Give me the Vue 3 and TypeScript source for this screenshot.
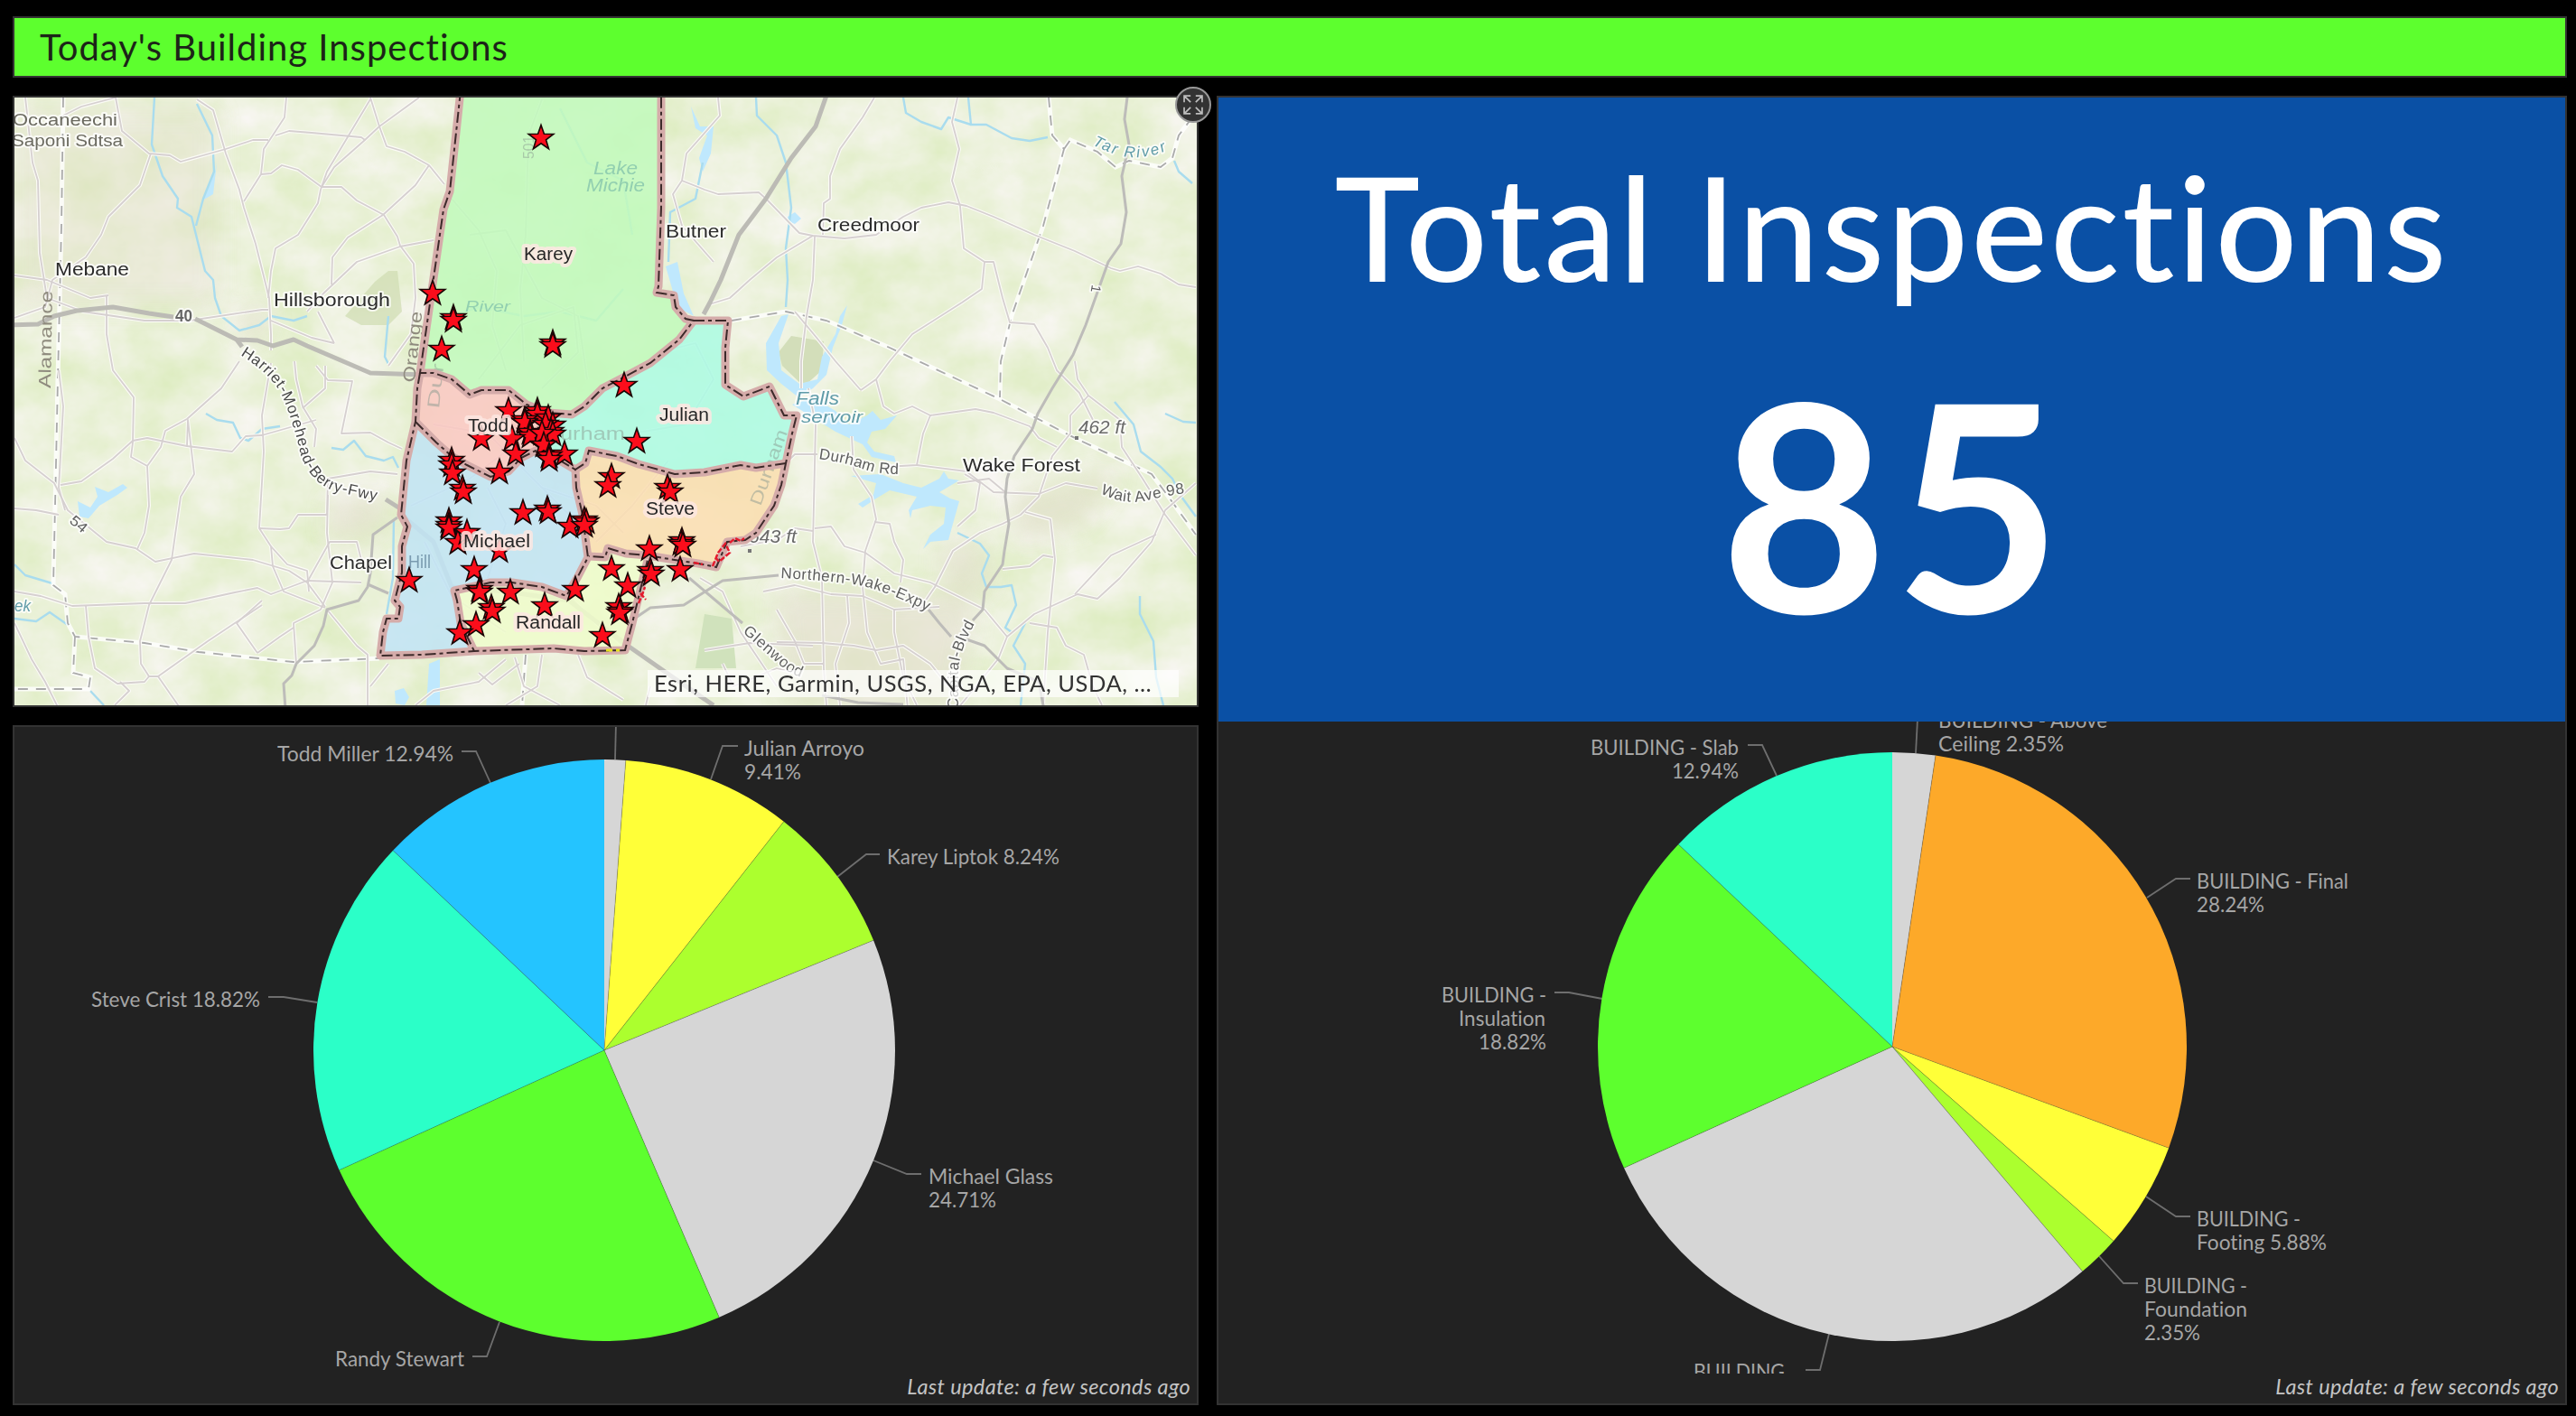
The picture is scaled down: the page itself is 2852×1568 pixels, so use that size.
<script setup lang="ts">
type Pt = [number, number]

interface Slice { value: number; color: string }
interface Label { x: number; y: number; w: number; text: string }
interface Pie { cx: number; cy: number; r: number; slices: Slice[]; leaders: string[]; labels: Label[] }
interface Place { x: number; y: number; w: number; text: string; kind: string; size?: number; rot?: number }

const inspectors: Pie = {
  cx: 669, cy: 1163, r: 322,
  slices: [
    { value: 1.18, color: '#d6d6d6' },
    { value: 9.41, color: '#ffff38' },
    { value: 8.24, color: '#acff2e' },
    { value: 24.71, color: '#d6d6d6' },
    { value: 24.71, color: '#5dff2e' },
    { value: 18.82, color: '#2bffc8' },
    { value: 12.94, color: '#24c4ff' },
  ],
  leaders: [
    '682,800 681,841', '817,826 800,826 787,863', '974,946 959,946 927,971',
    '1020,1300 1004,1300 967,1285', '523,1502 539,1502 553,1464',
    '297,1104 314,1104 351,1110', '511,832 527,832 543,867',
  ],
  labels: [
    { x: 307, y: 843, w: 195, text: 'Todd Miller 12.94%' },
    { x: 824, y: 837, w: 133, text: 'Julian Arroyo' },
    { x: 824, y: 863, w: 63, text: '9.41%' },
    { x: 982, y: 957, w: 191, text: 'Karey Liptok 8.24%' },
    { x: 101, y: 1115, w: 187, text: 'Steve Crist 18.82%' },
    { x: 1028, y: 1311, w: 138, text: 'Michael Glass' },
    { x: 1028, y: 1337, w: 75, text: '24.71%' },
    { x: 371, y: 1513, w: 143, text: 'Randy Stewart' },
  ],
}

const kinds: Pie = {
  cx: 2095, cy: 1159, r: 326,
  slices: [
    { value: 2.35, color: '#d6d6d6' },
    { value: 28.24, color: '#fda929' },
    { value: 5.88, color: '#ffff38' },
    { value: 2.35, color: '#acff2e' },
    { value: 29.42, color: '#d6d6d6' },
    { value: 18.82, color: '#5dff2e' },
    { value: 12.94, color: '#2bffc8' },
  ],
  leaders: [
    '2123,796 2121,834', '2425,973 2409,973 2377,994', '2425,1347 2409,1347 2376,1325',
    '2367,1421 2351,1421 2324,1391', '1999,1517 2015,1517 2025,1477',
    '1721,1099 1737,1099 1774,1106', '1935,825 1951,825 1967,859',
  ],
  labels: [
    { x: 2146, y: 806, w: 187, text: 'BUILDING - Above' },
    { x: 2146, y: 832, w: 139, text: 'Ceiling 2.35%' },
    { x: 1761, y: 836, w: 164, text: 'BUILDING - Slab' },
    { x: 1851, y: 862, w: 74, text: '12.94%' },
    { x: 2432, y: 984, w: 168, text: 'BUILDING - Final' },
    { x: 2432, y: 1010, w: 75, text: '28.24%' },
    { x: 1596, y: 1110, w: 116, text: 'BUILDING -' },
    { x: 1615, y: 1136, w: 96, text: 'Insulation' },
    { x: 1637, y: 1162, w: 75, text: '18.82%' },
    { x: 2432, y: 1358, w: 115, text: 'BUILDING -' },
    { x: 2432, y: 1384, w: 144, text: 'Footing 5.88%' },
    { x: 2374, y: 1432, w: 114, text: 'BUILDING -' },
    { x: 2374, y: 1458, w: 114, text: 'Foundation' },
    { x: 2374, y: 1484, w: 62, text: '2.35%' },
    { x: 1875, y: 1527, w: 101, text: 'BUILDING' },
  ],
}

function wedges(p: Pie) {
  const total = p.slices.reduce((s, v) => s + v.value, 0)
  let acc = 0
  const at = (f: number) => {
    const a = f * 2 * Math.PI
    return `${(p.cx + p.r * Math.sin(a)).toFixed(2)},${(p.cy - p.r * Math.cos(a)).toFixed(2)}`
  }
  return p.slices.map((s) => {
    const from = acc / total
    acc += s.value
    const to = acc / total
    return {
      color: s.color,
      d: `M${p.cx},${p.cy}L${at(from)}A${p.r},${p.r} 0 ${to - from > 0.5 ? 1 : 0} 1 ${at(to)}Z`,
      edge: `M${p.cx},${p.cy}L${at(from)}`,
    }
  })
}

const inspectorWedges = wedges(inspectors)
const kindWedges = wedges(kinds)

function starPath([x, y]: Pt, r = 14.5): string {
  const pts: string[] = []
  for (let i = 0; i < 10; i++) {
    const a = (i * Math.PI) / 5
    const q = i % 2 ? r * 0.4 : r
    pts.push(`${(x + q * Math.sin(a)).toFixed(1)},${(y - q * Math.cos(a)).toFixed(1)}`)
  }
  return pts.join(' ')
}

const stars: Pt[] = [
  [599, 153], [479, 325], [502, 352], [502, 355], [489, 387], [612, 380], [612, 383], [691, 427], [705, 489],
  [563, 455], [595, 455], [595, 459], [581, 465], [581, 468], [607, 463], [612, 471], [604, 470], [587, 479], [587, 483],
  [610, 478], [612, 481], [600, 480], [602, 493], [567, 486], [533, 486], [571, 503], [553, 523], [625, 503],
  [608, 505], [608, 509], [500, 510], [500, 515], [501, 524], [512, 541], [513, 545], [497, 577], [497, 582],
  [497, 585], [507, 601], [517, 590], [553, 610], [525, 631], [531, 653], [531, 656], [565, 656], [544, 673], [545, 677],
  [527, 692], [509, 701], [603, 671], [637, 653], [579, 568], [606, 564], [607, 567], [631, 583], [647, 576],
  [649, 578], [647, 582], [677, 528], [673, 538], [739, 540], [742, 545], [755, 599], [754, 602], [756, 604],
  [719, 608], [720, 632], [721, 636], [753, 631], [677, 630], [695, 649], [685, 672], [687, 677], [686, 679],
  [667, 704], [453, 643],
]

const districts = [
  { fill: '#c2f9bc', d: 'M510,100L498,212L491,232L480,308L465,413L480,413L500,420L520,437L533,432L563,432L583,448L607,457L633,459L647,450L667,430L692,417L720,402L752,376L768,355L759,353L748,340L746,327L727,324L729,317L732,230L732,100Z' },
  { fill: '#f9c8c1', d: 'M465,413L480,413L500,420L520,437L533,432L563,432L583,448L607,457L604,500L593,499L577,507L563,522L543,528L517,515L500,505L483,490L460,467L462,430Z' },
  { fill: '#adfae2', d: 'M607,457L633,459L647,450L667,430L692,417L720,402L752,376L768,355L806,355L803,385L803,426L823,439L852,428L868,460L882,460L877,480L870,513L837,518L820,515L780,523L747,525L707,514L683,505L652,499L648,513L637,520L620,510L604,500Z' },
  { fill: '#fadeb2', d: 'M870,513L865,537L857,560L837,590L825,598L805,600L793,628L773,624L747,620L717,615L693,613L673,607L670,617L652,616L648,595L645,570L638,540L637,520L648,513L652,499L683,505L707,514L747,525L780,523L820,515L837,518Z' },
  { fill: '#c1e4f4', d: 'M460,467L450,510L444,570L451,583L445,605L445,634L437,665L443,672L441,685L428,685L424,700L421,726L467,725L525,721L510,690L503,654L543,645L567,645L600,650L627,660L639,640L651,617L648,595L645,570L638,540L637,520L620,510L593,499L577,507L563,522L543,528L517,515L500,505L483,490Z' },
  { fill: '#effccc', d: 'M525,721L613,718L647,721L692,720L700,690L717,620L693,613L673,607L670,617L651,617L639,640L627,660L600,650L567,645L543,645L503,654L510,690Z' },
]

// Each shared boundary appears once so that the dashes stay readable.
const borders = [
  'M510,100L498,212L491,232L480,308L465,413L480,413L500,420L520,437L533,432L563,432L583,448L607,457L633,459L647,450L667,430L692,417L720,402L752,376L768,355L759,353L748,340L746,327L727,324L729,317L732,230L732,100',
  'M768,355L806,355L803,385L803,426L823,439L852,428L868,460L882,460L877,480L870,513L865,537L857,560L837,590L825,598L805,600L793,628L773,624L747,620L717,615L693,613L673,607L670,617L652,616',
  'M870,513L837,518L820,515L780,523L747,525L707,514L683,505L652,499L648,513L637,520L638,540L645,570L648,595L651,617L639,640L627,660L600,650L567,645L543,645L503,654L506,665L510,690L525,721',
  'M465,413L462,430L460,467L450,510L444,570L451,583L445,605L445,634L437,665L443,672L441,685L428,685L424,700L421,726L467,725L525,721L613,718L647,721L692,720L700,690L717,620',
  'M460,467L483,490L500,505L517,515L543,528L563,522L577,507L593,499L620,510L637,520',
]

const minorRoads = [
  'M28,108L36,180L42,200L44,280L52,330L92,345L160,355L210,355L290,343L297,343',
  'M16,305L52,310L100,330L120,327', 'M128,108L135,145L165,170L188,172L200,179L250,165L280,155L297,155',
  'M16,352L50,340L58,310L95,285L112,260L120,240L155,205L167,170', 'M70,128L90,118L128,108',
  'M218,110L236,122L250,170L265,210L270,230L283,270L298,330L300,370L300,388',
  'M317,108L315,130L292,165L289,193L270,223', 'M410,110L380,160L362,190L355,210L352,225L330,260L305,275L300,300L297,330',
  'M305,150L320,145L345,147L400,152L404,155', 'M289,193L300,192L312,183L330,188L356,207L378,207L395,222L425,238L440,262L443,272L458,292L460,330L455,370L430,405',
  'M464,108L420,140L404,155L370,185L356,207', 'M410,108L420,140L428,162L448,168L475,183L492,204',
  'M475,183L460,205L424,238L385,263L368,285L367,315', 'M480,266L443,273L395,290L358,325L340,345',
  'M300,355L345,374L370,380', 'M352,345L370,380', 'M118,328L118,370L125,410L148,440L147,490L145,506L163,516L165,560L160,590L152,608',
  'M65,410L70,450L65,540L72,565', 'M16,485L28,510L60,535L75,565L118,600L150,607L172,622L215,613L280,620L320,632L340,645L360,672',
  'M67,537L90,533L125,508L147,488L163,485L207,494L257,500L272,483L290,482L350,465',
  'M207,494L208,465L215,525L200,550L190,620L165,670L155,710L156,735L165,749L175,749L200,785',
  'M265,400L245,430L207,464L183,477L178,495L163,516', 'M300,402L290,460L292,500L287,585L300,605L302,627L314,655L360,673',
  'M326,400L328,420L335,450L350,475L348,495', 'M360,405L360,430L335,452', 'M350,405L363,421L390,422L378,480L410,479L430,490L445,497',
  'M287,585L310,586L320,585L330,570L362,570L363,530', 'M363,530L375,528L410,522L440,525', 'M363,548L362,590L368,645L355,675L325,690L328,735',
  'M300,605L318,625L340,632L342,655', 'M341,643L365,600L395,600L400,620', 'M16,655L45,660L80,671L160,668L205,668L260,656L285,651L300,658L340,643L400,645',
  'M95,671L98,705L105,740L130,757L160,755L165,749', 'M16,690L35,730L50,755L65,785', 'M133,755L143,765L127,781',
  'M362,675L395,715L407,725L407,785', 'M285,723L310,705L325,695', 'M285,723L262,690L290,665', 'M175,749L230,710L290,670',
  'M430,735L410,760', 'M795,108L797,128L760,170L755,200L745,215L755,250L790,290', 'M755,200L780,210L795,215L840,213L848,220',
  'M968,108L955,130L930,165L919,195L919,220L912,225L911,260', 'M848,220L885,258L900,261L935,264L970,260L1000,240L1020,230L1050,224L1070,228L1100,240L1145,260L1190,278L1230,297L1240,300L1260,295L1285,303L1305,315L1324,318',
  'M1060,108L1054,135L1062,165L1054,200L1063,228L1067,275L1090,290L1087,320L1065,335L1010,370L985,400L970,420L953,432',
  'M900,261L860,285L830,310L808,330L785,337', 'M902,262L900,310L893,350L887,400L887,430', 'M1090,290L1100,290L1110,330L1118,357L1145,359L1160,385L1170,410L1195,435L1210,465',
  'M880,345L905,375L925,400L953,432', 'M970,420L978,450L990,458L1010,450L1030,460L1080,453L1100,457L1140,472L1150,485L1170,495',
  'M1030,460L1022,480L1015,515L980,517', 'M1015,515L1070,522L1100,545L1150,547L1180,535L1215,541', 'M1190,400L1193,420L1205,438L1240,465L1242,495L1265,530L1290,570L1324,615',
  'M1205,438L1185,460L1185,480L1165,505L1150,550L1130,570L1110,580L1085,590L1055,610L1035,650L1020,672',
  'M1135,567L1163,575L1168,620L1160,700L1155,780', 'M1110,630L1140,627L1155,615L1166,617', 'M1324,535L1290,565L1275,600L1240,640L1215,663L1193,658L1145,680L1115,705L1105,730L1060,785',
  'M1190,658L1230,615L1280,592', 'M895,430L903,470L900,600L910,640L912,740L915,781', 'M943,483L945,520L965,550L970,575L958,610L955,650L960,700L975,735L1000,730L1005,785',
  'M902,585L920,583L935,605L958,612L990,635L1030,645L1090,675L1115,705', 'M968,578L985,580L990,600L1000,620L997,645',
  'M845,655L880,648L920,658L955,660L990,675L1040,672', 'M860,711L910,712L945,715L970,720L1000,715L1030,735L1050,760', 'M860,675L880,710L890,735L912,735',
  'M990,675L990,700L1000,750L1015,781', 'M938,660L940,690L925,735L930,781', 'M1140,690L1170,695L1180,715L1200,725L1210,760L1220,781',
  'M870,513L880,503L905,503', 'M1068,525L1085,535L1080,565L1060,583', 'M1113,545L1095,530L1060,535', 'M16,563L40,565L65,570',
  'M560,730L530,755L480,765L460,781', 'M570,728L580,760L620,781', 'M530,745L545,758L575,735', 'M600,725L595,760L560,781', 'M640,725L650,750L690,775', 'M720,760L715,781',
  'M820,605L862,597L880,585L900,588', 'M775,640L800,655L820,700L860,760', 'M780,720L830,712L900,715', 'M800,735L812,760L860,740L880,745',
  'M600,110L585,150L582,260L576,320L580,400', 'M500,220L530,255L550,300L545,360L560,410', 'M480,470L540,480L600,540L650,590', 'M455,560L520,530L560,500L560,440',
  'M470,600L500,660L560,700', 'M690,590L660,560L600,540', 'M700,480L760,470L790,420L770,380L730,390', 'M520,260L560,255L600,330L640,350L650,420',
  'M600,430L640,390L635,340L576,360L530,420', 'M660,600L700,560L740,510', 'M540,540L560,580L540,640', 'M620,650L660,690L690,715',
]

const midRoads = [
  'M1249,100L1245,132L1250,160L1242,195L1247,235L1241,270L1227,290L1202,360L1188,393L1165,430L1149,458L1143,475L1123,505L1115,530L1113,550L1117,580L1112,610L1110,625L1090,655L1088,675L1077,687',
  'M695,690L720,673L757,670L800,643L862,637', 'M1028,675L1040,690L1053,705', 'M1070,708L1090,715L1115,740L1150,755L1155,781',
  'M763,640L822,690', 'M440,573L413,592L410,635L407,650L397,665L362,675L358,693L348,715L328,735L323,748L314,757L316,785',
  'M407,647L430,657', 'M910,770L950,778L1000,780',
]

const highways = [
  'M10,360L42,359L60,350L85,344L125,340L165,347L192,351', 'M216,353L262,376L285,377L302,383L325,376L340,383L410,413L468,415',
  'M262,376L268,384', 'M427,553L446,565', 'M917,100L903,140L876,175L848,220L818,260L798,310L786,335L779,348',
  'M444,570L480,600L500,650L560,655L630,665L695,715L735,743L790,781',
]

const streams = [
  'M171,108L168,160L180,195L197,220L196,230L212,240L217,260L227,300L236,310L238,330L245,350L265,366L287,360L300,350L325,355L340,350',
  'M218,115L235,150L237,190L225,220L217,250', 'M228,458L240,465L258,468L266,485L275,488L290,475L310,472', 'M367,496L380,498L392,488L405,505L425,510L435,506L441,518',
  'M837,108L838,128L860,150L870,180L876,230L870,275L872,310L870,340', 'M1000,108L1003,125L1020,135L1042,143L1050,130L1075,138L1092,138L1120,153L1140,156L1160,152',
  'M1072,108L1075,138', 'M740,290L742,235L770,220L778,180', 'M1300,178L1305,190L1320,203', 'M1234,445L1255,470L1263,500L1285,517L1298,530L1308,550L1324,572',
  'M1290,458L1310,467L1324,468', 'M1060,590L1085,602L1095,615L1087,635L1092,650L1108,650L1120,648L1125,670L1113,695L1120,700L1135,690L1122,715L1135,735L1130,781',
  'M1262,660L1262,680L1277,710L1280,750L1288,781', 'M16,625L28,637L58,646', 'M16,685L40,688L55,678L75,692', 'M100,765L115,781', 'M436,575L435,640L428,680',
  'M430,350L426,395L430,403', 'M500,350L530,340L580,350L620,345L660,355L690,320', 'M620,120L650,180L690,200L700,260',
]

const lakes = [
  'M232,205L238,190L240,180L236,215L224,222Z', 'M86,555L88,572L98,574L110,560L130,548L141,540L136,536L120,545L105,539L108,550L100,562Z',
  'M765,118L775,140L790,140L787,170L778,190L774,175L783,150L770,142Z', 'M737,295L750,290L757,325L768,350L750,340Z',
  'M872,240L880,235L887,242L880,248L873,245Z', 'M865,350L873,348L862,380L865,410L885,425L905,420L910,395L925,370L930,350L938,338L932,360L922,385L915,415L900,430L884,440L865,425L849,410L848,380Z',
  'M877,448L900,440L925,455L940,470L960,460L966,455L975,465L993,460L980,475L965,478L960,490L968,500L990,505L992,512L965,506L955,492L940,485L925,478Z',
  'M942,527L975,525L1000,535L1020,540L1040,530L1045,522L1050,530L1062,532L1040,545L1052,552L1062,555L1055,580L1050,598L1030,600L1022,608L1030,592L1045,580L1047,562L1030,560L1010,565L1008,574L1006,565L1015,550L985,543L970,552L955,562L950,558L967,548L970,535Z',
  'M437,765L447,762L453,772L448,781L438,779Z', 'M475,735L487,730L487,781L472,781Z',
]

const countyLines = [
  'M70,108L68,250L64,420L61,560L59,648L72,658L75,690L83,705L160,712L220,722L325,733L420,729', 'M83,705L81,745L100,750L98,763L10,763',
  'M1161,108L1165,150L1178,165L1155,250L1120,350L1108,400L1107,440', 'M1178,165L1185,155L1215,168L1235,185L1250,178L1285,185L1298,175L1305,150L1320,130',
  'M810,355L870,345L915,355L985,385L1107,442L1190,485L1275,525L1290,545L1324,592', 'M582,725L578,781',
]

const places: Place[] = [
  { x: 14, y: 139, w: 116, text: 'Occaneechi', kind: 'park', size: 18 },
  { x: 13, y: 162, w: 123, text: 'Saponi Sdtsa', kind: 'park', size: 18 },
  { x: 61, y: 305, w: 82, text: 'Mebane', kind: 'town' },
  { x: 303, y: 339, w: 129, text: 'Hillsborough', kind: 'town' },
  { x: 737, y: 263, w: 67, text: 'Butner', kind: 'town' },
  { x: 905, y: 256, w: 113, text: 'Creedmoor', kind: 'town' },
  { x: 1066, y: 522, w: 130, text: 'Wake Forest', kind: 'town' },
  { x: 365, y: 630, w: 69, text: 'Chapel', kind: 'town' },
  { x: 194, y: 356, w: 19, text: '40', kind: 'shield', size: 18 },
  { x: 1194, y: 480, w: 52, text: '462 ft', kind: 'elev', size: 20 },
  { x: 829, y: 601, w: 53, text: '643 ft', kind: 'elev', size: 20 },
  { x: 881, y: 448, w: 48, text: 'Falls', kind: 'water', size: 20 },
  { x: 887, y: 468, w: 68, text: 'servoir', kind: 'water', size: 19 },
  { x: 16, y: 677, w: 18, text: 'ek', kind: 'water', size: 18 },
  { x: 56, y: 430, w: 108, text: 'Alamance', kind: 'county', size: 19, rot: -89 },
  { x: 459, y: 424, w: 79, text: 'Orange', kind: 'county', size: 19, rot: -84 },
  { x: 76, y: 578, w: 20, text: '54', kind: 'road', size: 16, rot: 40 },
  { x: 1209, y: 315, w: 8, text: '1', kind: 'road', size: 15, rot: 100 },
]

const ghosts: Place[] = [
  { x: 657, y: 193, w: 49, text: 'Lake', kind: 'ghost-water', size: 20 },
  { x: 649, y: 212, w: 65, text: 'Michie', kind: 'ghost-water', size: 20 },
  { x: 515, y: 345, w: 50, text: 'River', kind: 'ghost-water', size: 17 },
  { x: 620, y: 487, w: 72, text: 'urham', kind: 'ghost', size: 20 },
  { x: 452, y: 629, w: 25, text: 'Hill', kind: 'ghost-dark', size: 20 },
  { x: 591, y: 176, w: 26, text: '501', kind: 'ghost', size: 16, rot: -90 },
  { x: 486, y: 453, w: 50, text: 'Dur', kind: 'ghost', size: 19, rot: -84 },
  { x: 842, y: 561, w: 88, text: 'Durham', kind: 'ghost', size: 19, rot: -70 },
]

const crew: Place[] = [
  { x: 580, y: 288, w: 54, text: 'Karey', kind: 'crew' },
  { x: 730, y: 466, w: 55, text: 'Julian', kind: 'crew' },
  { x: 518, y: 478, w: 45, text: 'Todd', kind: 'crew' },
  { x: 715, y: 570, w: 54, text: 'Steve', kind: 'crew' },
  { x: 513, y: 606, w: 74, text: 'Michael', kind: 'crew' },
  { x: 571, y: 696, w: 72, text: 'Randall', kind: 'crew' },
]

const curved = [
  { id: 'harriet', d: 'M266,393Q302,415 313,440T333,503Q345,538 375,545T423,556L447,568', w: 238, text: 'Harriet-Morehead-Berry-Fwy', kind: 'freeway' },
  { id: 'durhamrd', d: 'M906,508Q935,512 955,519T1003,525', w: 91, text: 'Durham Rd', kind: 'road' },
  { id: 'wait', d: 'M1218,546Q1245,560 1270,554T1320,545', w: 96, text: 'Wait Ave 98', kind: 'road' },
  { id: 'northern', d: 'M864,640Q920,643 950,648T1035,681', w: 169, text: 'Northern-Wake-Expy', kind: 'road' },
  { id: 'capital', d: 'M1061,785L1061,745Q1061,720 1084,682', w: 98, text: 'Capital-Blvd', kind: 'road' },
  { id: 'glenwood', d: 'M822,700L862,735Q875,748 895,752', w: 82, text: 'Glenwood', kind: 'road' },
  { id: 'tar', d: 'M1209,160Q1240,176 1262,174T1298,163', w: 86, text: 'Tar River', kind: 'water' },
]

const fit = (p: Place) => (p.rot ? `rotate(${p.rot} ${p.x} ${p.y})` : undefined)
</script>

<template>
  <div class="dashboard">
    <header class="panel banner"><h1>Today's Building Inspections</h1></header>

    <main class="columns">
      <div class="column left">
        <section class="panel map">
          <svg class="canvas" viewBox="16 108 1309 673" preserveAspectRatio="none">
            <defs>
              <filter id="relief" x="0" y="0" width="100%" height="100%" color-interpolation-filters="sRGB">
                <feTurbulence type="fractalNoise" baseFrequency="0.014 0.018" numOctaves="5" seed="8" />
                <feColorMatrix values="0.14 0 0 0 0.852  0.05 0 0 0 0.922  0.26 0 0 0 0.725  0 0 0 0 1" />
              </filter>
              <filter id="soft"><feGaussianBlur stdDeviation="12" /></filter>
              <path v-for="c in curved" :id="c.id" :key="c.id" :d="c.d" />
            </defs>
            <rect x="16" y="108" width="1309" height="673" filter="url(#relief)" />
            <g filter="url(#soft)" fill="#e2e0cc" opacity=".7">
              <rect x="16" y="120" width="225" height="220" opacity=".6" />
              <path d="M365,555L430,550L420,590L365,600Z" />
              <path d="M860,655L1080,660L1060,781L870,781Z" />
              <path d="M1040,610L1080,595L1100,650L1050,660Z" />
              <path d="M1120,550L1240,520L1200,580L1130,600Z" />
              <path d="M265,345L300,340L290,375L270,375Z" />
            </g>
            <path d="M382,350L415,312L430,300L440,300L445,345L430,360L400,360Z" fill="#cfdcb0" opacity=".7" />
            <path d="M862,390L876,372L912,378L910,410L890,428L866,405Z" fill="#d3deba" />
            <path d="M780,680L810,685L815,740L770,740Z" fill="#d0e2bc" />
            <path v-for="(d, i) in lakes" :key="'l' + i" :d="d" fill="#bfe8fd" />
            <path v-for="(d, i) in streams" :key="'s' + i" :d="d" class="stream" />
            <path v-for="(d, i) in countyLines" :key="'cc' + i" :d="d" class="county-case" />
            <path v-for="(d, i) in countyLines" :key="'c' + i" :d="d" class="county-line" />
            <path v-for="(d, i) in minorRoads" :key="'mc' + i" :d="d" class="minor-case" />
            <path v-for="(d, i) in minorRoads" :key="'m' + i" :d="d" class="minor" />
            <path v-for="(d, i) in midRoads" :key="'r' + i" :d="d" class="mid" />
            <path v-for="(d, i) in highways" :key="'h' + i" :d="d" class="highway" />

            <text
              v-for="p in places" :key="p.text + p.y" :x="p.x" :y="p.y" :class="p.kind" :font-size="p.size ?? 20"
              :textLength="p.w" lengthAdjust="spacingAndGlyphs" :transform="fit(p)"
            >{{ p.text }}</text>
            <text v-for="c in curved" :key="'t' + c.id" :class="c.kind" font-size="17">
              <textPath :href="'#' + c.id" :textLength="c.w">{{ c.text }}</textPath>
            </text>
            <rect x="1190" y="483" width="4" height="4" fill="#777" />
            <rect x="828" y="608" width="4" height="4" fill="#777" />

            <path v-for="(z, i) in districts" :key="'z' + i" :d="z.d" :fill="z.fill" fill-opacity=".88" />
            <text
              v-for="p in ghosts" :key="p.text + p.y" :x="p.x" :y="p.y" :class="p.kind" :font-size="p.size ?? 20"
              :textLength="p.w" lengthAdjust="spacingAndGlyphs" :transform="fit(p)"
            >{{ p.text }}</text>
            <path v-for="(d, i) in borders" :key="'b' + i" :d="d" class="border-band" />
            <path v-for="(d, i) in borders" :key="'d' + i" :d="d" class="border-dash" />
            <path d="M789,627L795,612L803,602L808,612L796,622L792,617M808,601L814,596L820,599L824,596M768,623L778,625M707,668L712,656L714,650M709,657L715,664" fill="none" stroke="#e31a2c" stroke-width="2.4" stroke-dasharray="6 2" />
            <path d="M671,720L678,720M682,720L686,720" stroke="#e6e020" stroke-width="3" />

            <polygon v-for="(s, i) in stars" :key="'x' + i" :points="starPath(s)" class="star" />
            <text
              v-for="p in crew" :key="p.text" :x="p.x" :y="p.y" class="crew" font-size="20"
              :textLength="p.w" lengthAdjust="spacingAndGlyphs"
            >{{ p.text }}</text>
          </svg>
          <div class="attribution">Esri, HERE, Garmin, USGS, NGA, EPA, USDA, …</div>
          <button class="expand" aria-label="Expand">
            <svg viewBox="0 0 38 38">
              <path d="M8.5,16V8.5H16M8.5,8.5L16,16M22,8.5H29.5V16M29.5,8.5L22,16M8.5,22V29.5H16M8.5,29.5L16,22M22,29.5H29.5V22M29.5,29.5L22,22" />
            </svg>
          </button>
        </section>

        <section class="panel chart">
          <svg class="pie" viewBox="16 805 1309 716">
            <polyline v-for="(l, i) in inspectors.leaders" :key="'l' + i" :points="l" class="leader" />
            <path v-for="(w, i) in inspectorWedges" :key="i" :d="w.d" :fill="w.color" />
            <path v-for="(w, i) in inspectorWedges.slice(1)" :key="'e' + i" :d="w.edge" class="edge" />
            <text
              v-for="t in inspectors.labels" :key="t.text + t.y" :x="t.x" :y="t.y"
              :textLength="t.w" lengthAdjust="spacingAndGlyphs" class="label"
            >{{ t.text }}</text>
          </svg>
          <footer>Last update: a few seconds ago</footer>
        </section>
      </div>

      <div class="column panel right">
        <section class="indicator">
          <p class="caption">Total Inspections</p>
          <p class="total">85</p>
        </section>
        <section class="chart">
          <svg class="pie" viewBox="1349 799 1491 722">
            <polyline v-for="(l, i) in kinds.leaders" :key="'l' + i" :points="l" class="leader" />
            <path v-for="(w, i) in kindWedges" :key="i" :d="w.d" :fill="w.color" />
            <path v-for="(w, i) in kindWedges.slice(1)" :key="'e' + i" :d="w.edge" class="edge" />
            <text
              v-for="t in kinds.labels" :key="t.text + t.y" :x="t.x" :y="t.y"
              :textLength="t.w" lengthAdjust="spacingAndGlyphs" class="label"
            >{{ t.text }}</text>
          </svg>
          <footer>Last update: a few seconds ago</footer>
        </section>
      </div>
    </main>
  </div>
</template>

<style>
body { background: #000; }
</style>

<style scoped>
.dashboard {
  box-sizing: border-box;
  width: 2852px;
  height: 1568px;
  padding: 18px 10px 12px 14px;
  display: flex;
  flex-direction: column;
  gap: 20px;
  background: #000;
  font-family: Lato, "Open Sans", sans-serif;
  font-variant-ligatures: none;
  overflow: hidden;
}
.panel { box-sizing: border-box; border: 2px solid #333; background: #222; }
.banner { height: 68px; padding: 0 28px; display: flex; align-items: center; background: #5dff2e; }
.banner h1 { margin: 0; font-size: 40px; line-height: 60px; font-weight: 400; letter-spacing: 1px; color: #1c2418; white-space: nowrap; }
.columns { flex: 1; min-height: 0; display: flex; gap: 20px; }
.column { display: flex; flex-direction: column; }
.left { width: 1313px; gap: 20px; }
.right { flex: 1; }
.map { position: relative; height: 677px; }
.canvas { display: block; width: 1309px; height: 673px; }
.chart { flex: 1; min-height: 0; display: flex; flex-direction: column; background: #222; }
.pie { display: block; flex: 1; min-height: 0; width: 100%; overflow: hidden; }
.chart footer { height: 33px; padding-right: 7px; text-align: right; font-size: 23.5px; line-height: 29px; letter-spacing: 0.38px; font-style: italic; color: #c4c4c4; }
.indicator { height: 691px; background: #0a50a5; color: #fff; text-align: center; }
.indicator p { margin: 0; white-space: nowrap; }
.caption { font-size: 160px; line-height: 200px; padding-top: 42px; font-weight: 500; letter-spacing: 3px; }
.total { font-size: 320px; line-height: 380px; padding-top: 15px; font-weight: 700; letter-spacing: 7px; text-indent: 5px; }
.attribution {
  position: absolute; right: 20px; bottom: 9px; box-sizing: border-box; width: 588px; height: 30px;
  padding-left: 7px; background: rgba(255, 255, 255, 0.7); color: #323232; font-size: 25.5px; line-height: 29px; letter-spacing: 0.54px; white-space: nowrap;
}
.expand {
  position: absolute; top: -12px; right: -16px; width: 40px; height: 40px; padding: 0; box-sizing: border-box;
  border: 2px solid #999; border-radius: 50%; background: #333;
}
.expand svg { display: block; width: 36px; height: 36px; }
.expand path { fill: none; stroke: #bdbdbd; stroke-width: 1.8; }

.leader { fill: none; stroke: #6e6e6e; stroke-width: 1.8; }
.edge { stroke: #444; stroke-opacity: 0.3; stroke-width: 1; }
.label { fill: #a6a6a6; font-size: 22.5px; }

.stream { fill: none; stroke: #a9dcee; stroke-width: 2.4; stroke-linejoin: round; }
.minor-case { fill: none; stroke: #fbfbf6; stroke-width: 4; stroke-linejoin: round; }
.minor { fill: none; stroke: #d6d0d0; stroke-width: 1.8; stroke-linejoin: round; }
.mid { fill: none; stroke: #bdbcb9; stroke-width: 3; stroke-linejoin: round; }
.highway { fill: none; stroke: #bcbbb5; stroke-width: 5; stroke-linejoin: round; }
.county-case { fill: none; stroke: #fff; stroke-opacity: 0.8; stroke-width: 5; }
.county-line { fill: none; stroke: #aaa; stroke-width: 1.8; stroke-dasharray: 11 9; }
.border-band { fill: none; stroke: #d5acaa; stroke-width: 9; stroke-linejoin: round; }
.border-dash { fill: none; stroke: #3c2a2a; stroke-width: 2; stroke-dasharray: 12 4 4 4; }
.star { fill: #fb0d1b; stroke: #1a0505; stroke-width: 1.6; }

.canvas text { font-family: "Liberation Sans", Arial, sans-serif; paint-order: stroke; stroke: rgba(255, 255, 255, 0.75); stroke-width: 4px; stroke-linejoin: round; }
.canvas .town { fill: #2b2b2b; }
.canvas .park { fill: #6b6a60; }
.canvas .road { fill: #5e5e5e; }
.canvas .freeway { fill: #484848; }
.canvas .shield { fill: #666; font-weight: 700; }
.canvas .elev { fill: #6a6a6a; font-style: italic; }
.canvas .water { fill: #5f9ba8; font-style: italic; }
.canvas .county { fill: #8f8b7e; stroke: none; }
.canvas .ghost { fill: #8a9a90; fill-opacity: 0.5; stroke: none; }
.canvas .ghost-dark { fill: #7a9bb0; stroke: none; }
.canvas .ghost-water { fill: #92cfb0; font-style: italic; stroke: none; }
.canvas .crew { fill: #262626; stroke: rgba(253, 232, 226, 0.85); stroke-width: 8px; }
</style>
